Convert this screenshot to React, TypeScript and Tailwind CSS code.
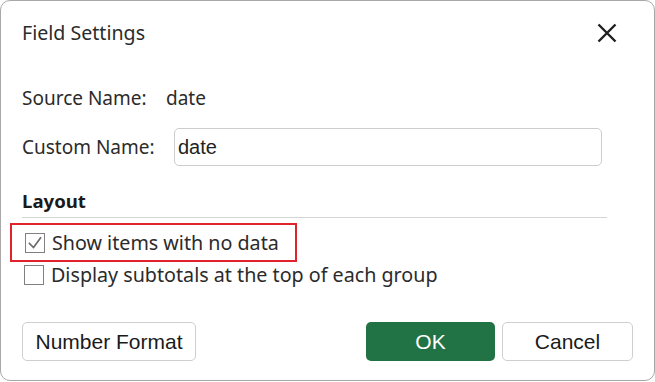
import React from 'react';

function CheckBox({ checked }: { checked: boolean }) {
  return (
    <div className="w-[20px] h-[20px] border-[1.5px] border-[#808080] bg-white flex items-center justify-center shrink-0">
      {checked && (
        <svg width="16" height="16" viewBox="0 0 16 16" fill="none">
          <path d="M2.5 8.5 L6.5 12.5 L13.5 3" stroke="#6b6b6b" strokeWidth="1.7" strokeLinecap="square" />
        </svg>
      )}
    </div>
  );
}

export default function App() {
  return (
    <div className="w-[655px] h-[382px] bg-white">
      <div
        className="h-[381px] rounded-[10px] border border-[#a8a8a8] flex flex-col text-[#2b2b2b]"
        style={{ fontFamily: '"Noto Sans", sans-serif' }}
      >
        {/* Header */}
        <div className="h-[63px] flex items-center justify-between pl-[21px] pr-[37px]">
          <span className="text-[19.6px]">Field Settings</span>
          <svg width="20" height="20" viewBox="0 0 20 20">
            <path d="M1.5 1.5 L18.5 18.5 M18.5 1.5 L1.5 18.5" stroke="#1f1f1f" strokeWidth="2.4" />
          </svg>
        </div>

        {/* Source Name */}
        <div className="mt-[16px] h-[36px] flex items-center pl-[21px] text-[19px]">
          <span className="w-[144px]">Source Name:</span>
          <span>date</span>
        </div>

        {/* Custom Name */}
        <div className="mt-[12px] h-[38px] flex items-center pl-[21px] pr-[52px] text-[19px]">
          <span className="w-[152px] shrink-0">Custom Name:</span>
          <div
            className="flex-1 h-[38px] border border-[#cdcdcd] rounded-[5px] flex items-center pl-[3px] text-[20px] text-[#222]"
            style={{ fontFamily: '"Liberation Sans", Arial, sans-serif' }}
          >
            date
          </div>
        </div>

        {/* Layout */}
        <div className="mt-[18px] ml-[21px] mr-[47px] h-[34px] flex items-center border-b border-[#d4d4d4] text-[18.6px] font-bold text-[#1a1a1a]">
          Layout
        </div>

        <div className="mt-[5px] ml-[9px] w-[287px] h-[39px] border-2 border-[#e0232b] flex items-center pl-[13px] gap-[7px] text-[19.7px]">
          <CheckBox checked />
          <span>Show items with no data</span>
        </div>

        <div className="mt-[3px] h-[20px] flex items-center pl-[23px] gap-[7px] text-[19.7px]">
          <CheckBox checked={false} />
          <span>Display subtotals at the top of each group</span>
        </div>

        {/* Buttons */}
        <div
          className="mt-[37px] flex items-center px-[21px] text-[21px]"
          style={{ fontFamily: '"Liberation Sans", Arial, sans-serif' }}
        >
          <button className="h-[39px] w-[174px] border border-[#cfcfcf] rounded-[5px] bg-white text-[#1a1a1a]">
            Number Format
          </button>
          <div className="flex-1" />
          <button className="h-[39px] w-[129px] rounded-[5px] bg-[#217346] text-white">OK</button>
          <button className="ml-[7px] h-[39px] w-[131px] border border-[#cfcfcf] rounded-[5px] bg-white text-[#1a1a1a]">
            Cancel
          </button>
        </div>
      </div>
    </div>
  );
}
